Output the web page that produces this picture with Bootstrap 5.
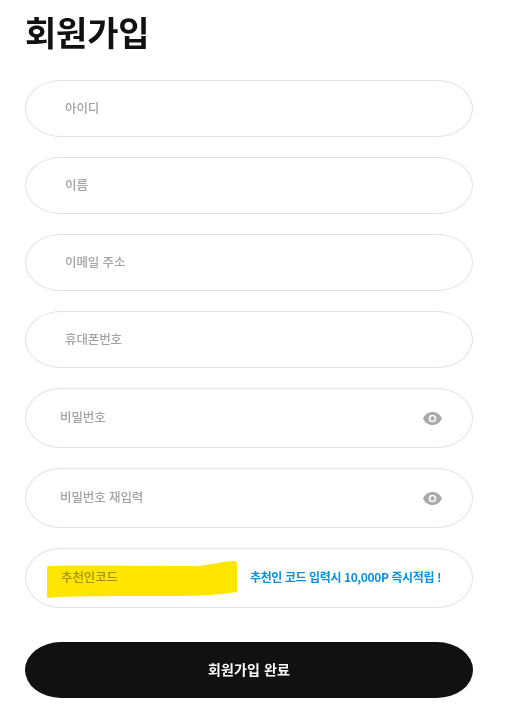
<!DOCTYPE html>
<html lang="ko">
<head>
<meta charset="utf-8">
<title>회원가입</title>
<link rel="stylesheet" href="https://cdn.jsdelivr.net/npm/bootstrap@5.3.0/dist/css/bootstrap.min.css">
<style>
body{font-family:"Noto Sans CJK KR","Noto Sans",sans-serif;background:#fff;overflow:hidden;}
.join-wrap{width:448px;margin-left:25px;}
.join-title{font-size:34px;font-weight:700;color:#111;line-height:48px;margin:8px 0 24px;letter-spacing:-.2px;}
.pill-field{height:57px;border:1px solid #e2e2e2;border-radius:36px / 28.5px;background:#fff;padding:0 30px 0 39px;font-size:12.5px;font-weight:500;color:#a2a2a2;letter-spacing:-.1px;margin-bottom:20px;position:relative;}
.pill-tall{height:60px;border-radius:36px / 30px;padding-left:34px;}
.pill-tall>span{margin-bottom:2px;}
.pill-code{padding-left:35px;margin-bottom:34px;}
.code-note{position:absolute;left:224px;top:calc(50% - 1px);transform:translateY(-50%);font-size:12px;font-weight:700;color:#0f8fd6;letter-spacing:-.4px;white-space:nowrap;}
.scribble{position:absolute;left:20px;top:10px;width:192px;height:41px;mix-blend-mode:multiply;}
.eye-ico{width:19px;height:13px;}
.submit-pill{height:56px;width:100%;border:0;border-radius:36px / 28px;background:#111;color:#fff;font-size:14px;font-weight:700;letter-spacing:.15px;padding:0 0 2px;}
.submit-pill:hover{background:#111;color:#fff;}
</style>
</head>
<body>
<div class="join-wrap">
  <h1 class="join-title">회원가입</h1>
  <form>
    <div class="pill-field d-flex align-items-center"><span>아이디</span></div>
    <div class="pill-field d-flex align-items-center"><span>이름</span></div>
    <div class="pill-field d-flex align-items-center"><span>이메일 주소</span></div>
    <div class="pill-field d-flex align-items-center"><span>휴대폰번호</span></div>
    <div class="pill-field pill-tall d-flex align-items-center justify-content-between"><span>비밀번호</span>
      <svg class="eye-ico" viewBox="0 0 19 13"><path fill="#aaa" fill-rule="evenodd" d="M9.500 0C5.200 0 1.600 2.700 0 6.500 1.600 10.300 5.200 13 9.500 13S17.400 10.300 19 6.500C17.400 2.700 13.800 0 9.500 0ZM9.500 10.300a3.800 3.800 0 1 1 0-7.600 3.800 3.800 0 0 1 0 7.600ZM9.500 4.300a2.200 2.200 0 1 0 0 4.400 2.200 2.200 0 0 0 0-4.400Z"/></svg></div>
    <div class="pill-field pill-tall d-flex align-items-center justify-content-between"><span>비밀번호 재입력</span>
      <svg class="eye-ico" viewBox="0 0 19 13"><path fill="#aaa" fill-rule="evenodd" d="M9.500 0C5.200 0 1.600 2.700 0 6.500 1.600 10.300 5.200 13 9.500 13S17.400 10.300 19 6.500C17.400 2.700 13.800 0 9.500 0ZM9.500 10.300a3.800 3.800 0 1 1 0-7.600 3.800 3.800 0 0 1 0 7.600ZM9.500 4.300a2.200 2.200 0 1 0 0 4.400 2.200 2.200 0 0 0 0-4.400Z"/></svg></div>
    <div class="pill-field pill-tall pill-code d-flex align-items-center"><span>추천인코드</span>
      <svg class="scribble" viewBox="0 0 192 41" preserveAspectRatio="none"><path fill="#ffe600" d="M2 7 C40 6 100 7 150 7 C165 6 178 2 188 2 Q191 2 191 5 L191 33 C172 36 155 37 120 37 C80 37 40 37 14 38 L2 39 Q1 39 1 37 L1 9 Q1 7 2 7 Z"/></svg>
      <span class="code-note">추천인 코드 입력시 10,000P 즉시적립 !</span>
    </div>
    <button type="button" class="btn submit-pill">회원가입 완료</button>
  </form>
</div>
<script src="https://cdn.jsdelivr.net/npm/bootstrap@5.3.0/dist/js/bootstrap.bundle.min.js"></script>
</body>
</html>
